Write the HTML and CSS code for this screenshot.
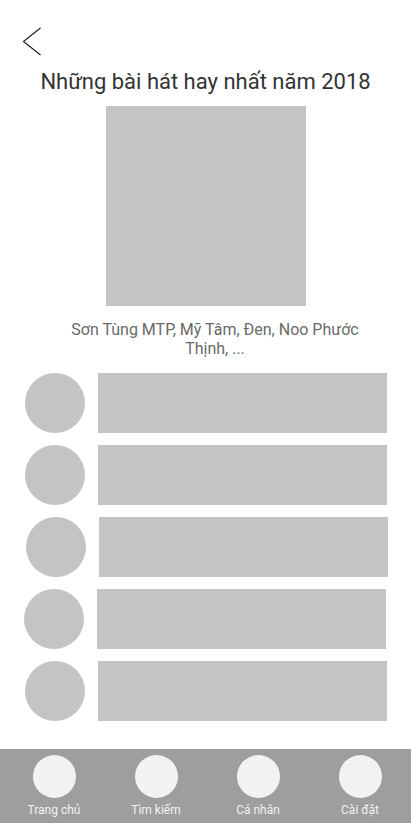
FILE: index.html
```html
<!DOCTYPE html>
<html lang="vi">
<head>
    <meta charset="UTF-8">
    <meta name="viewport" content="width=device-width, initial-scale=1.0">
    <title>Những bài hát hay nhất năm 2018</title>
    <link rel="stylesheet" href="styles.css">
</head>
<body>
    <div class="screen">
        <div class="top-bar">
            <a class="back" href="#">
                <svg width="20" height="30" viewBox="0 0 20 30">
                    <polyline points="18.5,1 1.5,14.5 18.5,28" fill="none" stroke="#222" stroke-width="1.2"/>
                </svg>
            </a>
        </div>

        <h1 class="title">Những bài hát hay nhất năm 2018</h1>
        <div class="cover"></div>
        <p class="artists">Sơn Tùng MTP, Mỹ Tâm, Đen, Noo Phước Thịnh, ...</p>

        <ul class="songs">
            <li class="song"><span class="thumb"></span><span class="bar"></span></li>
            <li class="song"><span class="thumb"></span><span class="bar"></span></li>
            <li class="song song-right"><span class="thumb"></span><span class="bar"></span></li>
            <li class="song song-left"><span class="thumb"></span><span class="bar"></span></li>
            <li class="song"><span class="thumb"></span><span class="bar"></span></li>
        </ul>
    </div>

    <nav class="tab-bar">
        <a class="tab" href="#"><span class="tab-icon"></span><span class="tab-label">Trang chủ</span></a>
        <a class="tab" href="#"><span class="tab-icon"></span><span class="tab-label">Tìm kiếm</span></a>
        <a class="tab" href="#"><span class="tab-icon"></span><span class="tab-label">Cá nhân</span></a>
        <a class="tab" href="#"><span class="tab-icon"></span><span class="tab-label">Cài đặt</span></a>
    </nav>
</body>
</html>
```

FILE: styles.css
```css
body {
    font-family: Roboto, "Noto Sans", sans-serif;
    background-color: #fff;
    margin: 0;
    padding: 0;
    width: 411px;
    height: 823px;
    display: flex;
    flex-direction: column;
    overflow: hidden;
}

.screen {
    flex: 1;
}

.top-bar {
    padding: 27px 0 0 22px;
    height: 30px;
}

.back {
    display: block;
    width: 20px;
    height: 30px;
}

.back svg {
    display: block;
}

.title {
    margin: 12px 0 0;
    font-size: 22px;
    font-weight: 400;
    line-height: 26px;
    color: #333;
    text-align: center;
}

.cover {
    width: 200px;
    height: 200px;
    margin: 11px auto 0;
    background-color: #c4c4c4;
}

.artists {
    width: 300px;
    margin: 15px 0 0 65px;
    font-size: 16px;
    line-height: 18.5px;
    color: #6a6a6a;
    text-align: center;
}

.songs {
    list-style: none;
    margin: 15px 0 0;
    padding: 0 24px 0 25px;
    display: flex;
    flex-direction: column;
    gap: 12px;
}

.song {
    display: flex;
    align-items: center;
    gap: 13px;
    height: 60px;
}

.song-right {
    margin-left: 1px;
    margin-right: -1px;
}

.song-left {
    margin-left: -1px;
    margin-right: 1px;
}

.thumb {
    width: 60px;
    height: 60px;
    border-radius: 50%;
    background-color: #c4c4c4;
    flex-shrink: 0;
}

.bar {
    flex: 1;
    height: 60px;
    background-color: #c4c4c4;
}

.tab-bar {
    height: 74px;
    background-color: #9e9e9e;
    display: grid;
    grid-template-columns: repeat(4, 102px);
    padding-left: 3px;
}

.tab {
    display: flex;
    flex-direction: column;
    align-items: center;
    padding-top: 6px;
    text-decoration: none;
}

.tab-icon {
    width: 43px;
    height: 43px;
    border-radius: 50%;
    background-color: #f2f2f2;
}

.tab-label {
    margin-top: 5px;
    font-size: 12px;
    line-height: 14px;
    color: #f2f2f2;
}
```
